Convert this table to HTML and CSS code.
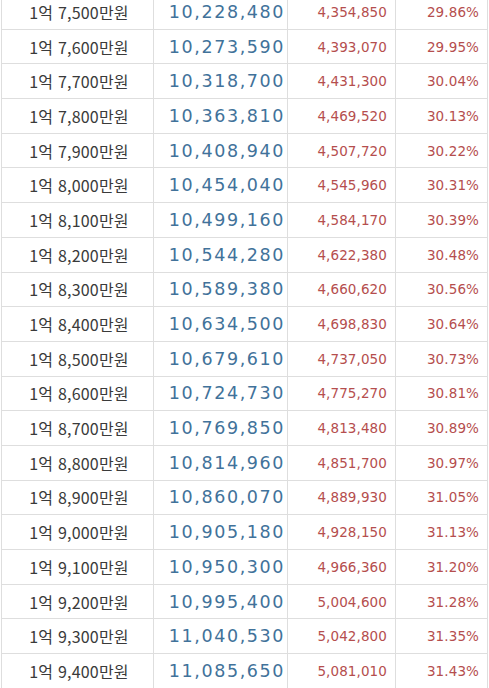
FILE: index.html
```html
<!DOCTYPE html>
<html lang="ko">
<head>
<meta charset="utf-8">
<link rel="stylesheet" href="styles.css">
</head>
<body>
<table class="tax">
<colgroup><col class="c1"><col class="c2"><col class="c3"><col class="c4"></colgroup>
<tbody>
<tr><td class="sal">1억 7,500만원</td><td class="net">10,228,480</td><td class="tx">4,354,850</td><td class="rt">29.86%</td></tr>
<tr><td class="sal">1억 7,600만원</td><td class="net">10,273,590</td><td class="tx">4,393,070</td><td class="rt">29.95%</td></tr>
<tr><td class="sal">1억 7,700만원</td><td class="net">10,318,700</td><td class="tx">4,431,300</td><td class="rt">30.04%</td></tr>
<tr><td class="sal">1억 7,800만원</td><td class="net">10,363,810</td><td class="tx">4,469,520</td><td class="rt">30.13%</td></tr>
<tr><td class="sal">1억 7,900만원</td><td class="net">10,408,940</td><td class="tx">4,507,720</td><td class="rt">30.22%</td></tr>
<tr><td class="sal">1억 8,000만원</td><td class="net">10,454,040</td><td class="tx">4,545,960</td><td class="rt">30.31%</td></tr>
<tr><td class="sal">1억 8,100만원</td><td class="net">10,499,160</td><td class="tx">4,584,170</td><td class="rt">30.39%</td></tr>
<tr><td class="sal">1억 8,200만원</td><td class="net">10,544,280</td><td class="tx">4,622,380</td><td class="rt">30.48%</td></tr>
<tr><td class="sal">1억 8,300만원</td><td class="net">10,589,380</td><td class="tx">4,660,620</td><td class="rt">30.56%</td></tr>
<tr><td class="sal">1억 8,400만원</td><td class="net">10,634,500</td><td class="tx">4,698,830</td><td class="rt">30.64%</td></tr>
<tr><td class="sal">1억 8,500만원</td><td class="net">10,679,610</td><td class="tx">4,737,050</td><td class="rt">30.73%</td></tr>
<tr><td class="sal">1억 8,600만원</td><td class="net">10,724,730</td><td class="tx">4,775,270</td><td class="rt">30.81%</td></tr>
<tr><td class="sal">1억 8,700만원</td><td class="net">10,769,850</td><td class="tx">4,813,480</td><td class="rt">30.89%</td></tr>
<tr><td class="sal">1억 8,800만원</td><td class="net">10,814,960</td><td class="tx">4,851,700</td><td class="rt">30.97%</td></tr>
<tr><td class="sal">1억 8,900만원</td><td class="net">10,860,070</td><td class="tx">4,889,930</td><td class="rt">31.05%</td></tr>
<tr><td class="sal">1억 9,000만원</td><td class="net">10,905,180</td><td class="tx">4,928,150</td><td class="rt">31.13%</td></tr>
<tr><td class="sal">1억 9,100만원</td><td class="net">10,950,300</td><td class="tx">4,966,360</td><td class="rt">31.20%</td></tr>
<tr><td class="sal">1억 9,200만원</td><td class="net">10,995,400</td><td class="tx">5,004,600</td><td class="rt">31.28%</td></tr>
<tr><td class="sal">1억 9,300만원</td><td class="net">11,040,530</td><td class="tx">5,042,800</td><td class="rt">31.35%</td></tr>
<tr><td class="sal">1억 9,400만원</td><td class="net">11,085,650</td><td class="tx">5,081,010</td><td class="rt">31.43%</td></tr>
</tbody>
</table>
</body>
</html>
```

FILE: styles.css
```css
html, body {
  margin: 0;
  padding: 0;
  background: #ffffff;
}
body {
  overflow: hidden;
}
.tax {
  border-collapse: collapse;
  table-layout: fixed;
  width: 486px;
  margin: -6px 0 0 1px;
}
.c1 { width: 152px; }
.c2 { width: 134px; }
.c3 { width: 108px; }
.c4 { width: 92px; }
.tax td {
  border: 1px solid #dedede;
  height: 33.7px;
  padding: 0;
  vertical-align: middle;
  white-space: nowrap;
}
.sal {
  text-align: center;
  font-family: "Noto Sans CJK KR", "Noto Sans", sans-serif;
  font-size: 16px;
  font-weight: 400;
  letter-spacing: 0.2px;
  color: #3a3a3a;
  padding-left: 3px !important;
}
.net {
  text-align: right;
  font-family: "DejaVu Sans", sans-serif;
  font-size: 17.5px;
  font-weight: 400;
  letter-spacing: 1.6px;
  color: #41729a;
  padding-right: 2px !important;
}
.tx {
  text-align: right;
  font-family: "DejaVu Sans", sans-serif;
  font-size: 13.5px;
  font-weight: 400;
  letter-spacing: 0.1px;
  color: #b54e4e;
  padding-right: 8px !important;
}
.rt {
  text-align: right;
  font-family: "DejaVu Sans", sans-serif;
  font-size: 13.5px;
  font-weight: 400;
  letter-spacing: 0.1px;
  color: #b54e4e;
  padding-right: 8px !important;
}
```
